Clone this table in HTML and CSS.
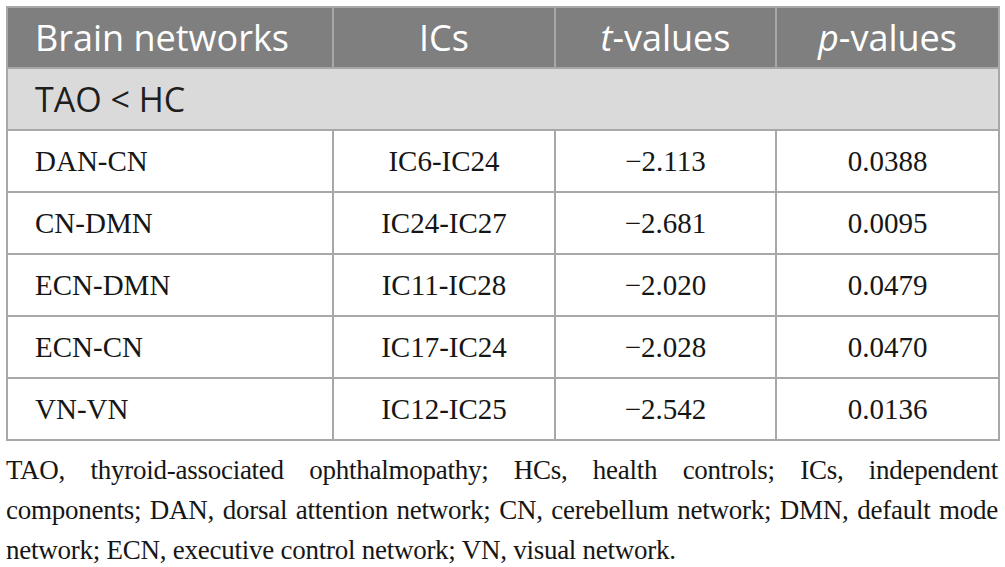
FILE: index.html
```html
<!DOCTYPE html>
<html lang="en">
<head>
    <meta charset="UTF-8">
    <title>Brain network connectivity</title>
    <link rel="stylesheet" href="styles.css">
</head>
<body>
    <div class="page">
        <table class="data-table">
            <colgroup>
                <col class="col-net">
                <col class="col-ic">
                <col class="col-t">
                <col class="col-p">
            </colgroup>
            <thead>
                <tr>
                    <th class="left">Brain networks</th>
                    <th>ICs</th>
                    <th><i>t</i>-values</th>
                    <th><i>p</i>-values</th>
                </tr>
            </thead>
            <tbody>
                <tr class="group-row"><td colspan="4">TAO &lt; HC</td></tr>
                <tr><td class="left">DAN-CN</td><td>IC6-IC24</td><td>&minus;2.113</td><td>0.0388</td></tr>
                <tr><td class="left">CN-DMN</td><td>IC24-IC27</td><td>&minus;2.681</td><td>0.0095</td></tr>
                <tr><td class="left">ECN-DMN</td><td>IC11-IC28</td><td>&minus;2.020</td><td>0.0479</td></tr>
                <tr><td class="left">ECN-CN</td><td>IC17-IC24</td><td>&minus;2.028</td><td>0.0470</td></tr>
                <tr><td class="left">VN-VN</td><td>IC12-IC25</td><td>&minus;2.542</td><td>0.0136</td></tr>
            </tbody>
        </table>
        <p class="note">TAO, thyroid-associated ophthalmopathy; HCs, health controls; ICs, independent components; DAN, dorsal attention network; CN, cerebellum network; DMN, default mode network; ECN, executive control network; VN, visual network.</p>
    </div>
</body>
</html>
```

FILE: styles.css
```css
* {
    margin: 0;
    padding: 0;
    box-sizing: border-box;
}

body {
    background: #fff;
    font-family: 'Liberation Serif', 'Times New Roman', serif;
    color: #161616;
}

.page {
    padding: 6px 7px 0 6px;
}

.data-table {
    width: 992px;
    border-collapse: collapse;
    table-layout: fixed;
}

.col-net { width: 326px; }
.col-ic { width: 222px; }
.col-t { width: 221px; }
.col-p { width: 223px; }

.data-table th,
.data-table td {
    border: 2px solid #a8a8a8;
    height: 62px;
    text-align: center;
    vertical-align: middle;
}

.data-table th {
    background: #7f7f7f;
    color: #fff;
    font-family: 'Open Sans', 'Liberation Sans', sans-serif;
    font-weight: 400;
    font-size: 36px;
    height: 61px;
    line-height: 1;
}

.data-table td {
    font-size: 29px;
    line-height: 1;
}

.data-table .left {
    text-align: left;
    padding-left: 27px;
}

.group-row td {
    background: #dadada;
    text-align: left;
    padding-left: 27px;
    font-family: 'Open Sans', 'Liberation Sans', sans-serif;
    font-size: 34px;
    color: #1e1e1e;
}

.note {
    margin-top: 9px;
    width: 992px;
    font-size: 27px;
    letter-spacing: -0.25px;
    line-height: 40px;
    text-align: justify;
}
```
